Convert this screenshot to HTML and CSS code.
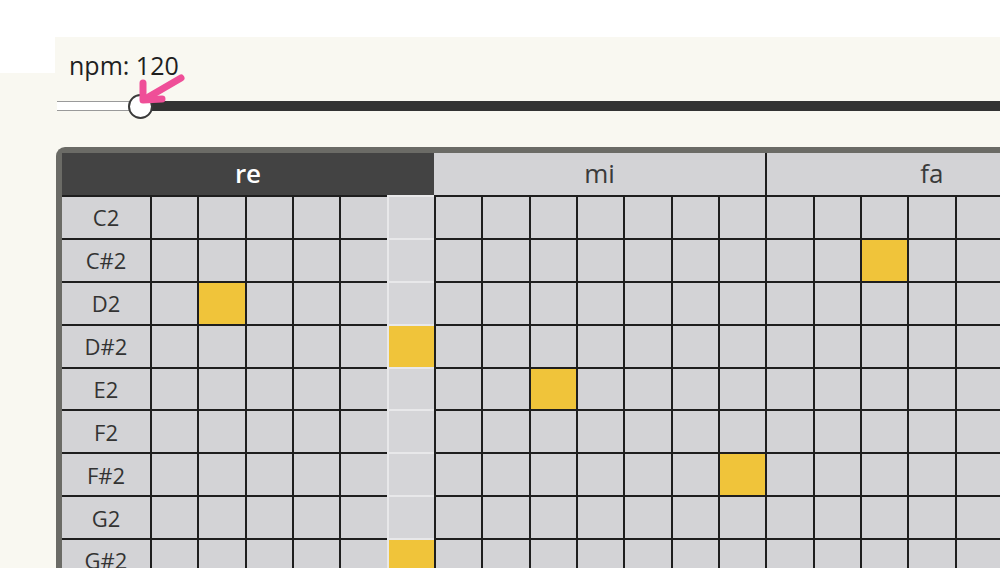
FILE: index.html
```html
<!DOCTYPE html>
<html>
<head>
<meta charset="utf-8">
<link rel="stylesheet" href="styles.css">
</head>
<body>
<div class="topbar"></div>
<div class="head">
  <div class="corner"></div>
  <div class="bpm"><span class="bpm-label">npm: 120</span></div>
</div>
<main class="main">
  <div class="slider">
    <div class="track-left"></div>
    <div class="track-right"></div>
    <div class="thumb"></div>
    <svg class="arrow" width="50" height="40" viewBox="0 0 50 40">
      <path d="M44 7 L8 28" stroke="#ef4f98" stroke-width="7" stroke-linecap="round" fill="none"/>
      <path d="M6 12 L6 29 L25 28" stroke="#ef4f98" stroke-width="7" stroke-linecap="round" stroke-linejoin="round" fill="none"/>
    </svg>
  </div>
  <div class="frame">
    <div class="grid" id="grid">
      <div class="hdr hdr-active" style="grid-column: span 7">re</div>
      <div class="hdr" style="grid-column: span 7">mi</div>
      <div class="hdr hdr-sep" style="grid-column: span 7">fa</div>
    </div>
  </div>
</main>
<script src="app.js"></script>
</body>
</html>
```
FILE: styles.css
```css
html, body {
  margin: 0;
  padding: 0;
}
body {
  background: #f9f8f1;
  overflow: hidden;
  height: 568px;
  font-family: "Open Sans", "DejaVu Sans", sans-serif;
}
.topbar {
  height: 37px;
  background: #ffffff;
}
.head {
  display: flex;
  height: 36px;
}
.corner {
  width: 55px;
  background: #ffffff;
}
.bpm {
  flex: 1;
  padding: 13px 0 0 14px;
  box-sizing: border-box;
  line-height: 30px;
  font-size: 25px;
  color: #1f1f1f;
  white-space: nowrap;
}
.main {
  padding-top: 28px;
}
.slider {
  position: relative;
  display: flex;
  margin-left: 57px;
  height: 10px;
}
.track-left {
  width: 84px;
  background: #ffffff;
  border-top: 1px solid #9a9a9a;
  border-bottom: 1px solid #9a9a9a;
  box-sizing: border-box;
}
.track-right {
  flex: 1;
  background: #333333;
}
.thumb {
  position: absolute;
  left: 71px;
  top: -7px;
  width: 21px;
  height: 21px;
  border-radius: 50%;
  background: #ffffff;
  border: 2px solid #3a3a3a;
}
.arrow {
  position: absolute;
  left: 80px;
  top: -30px;
}
.frame {
  margin: 36px 0 0 56px;
  width: 1100px;
  border: 6px solid #6b6b66;
  border-right: none;
  border-radius: 9px 0 0 0;
  background: #d3d3d6;
}
.grid {
  display: grid;
  grid-template-columns: 88px repeat(20, 47.333px);
  grid-template-rows: 42px repeat(9, 42.88px);
}
.hdr {
  display: flex;
  align-items: center;
  justify-content: center;
  padding-bottom: 3px;
  font-size: 26px;
  color: #3a3a3a;
  background: #d3d3d6;
  box-sizing: border-box;
}
.hdr-active {
  background: #434343;
  color: #ffffff;
  font-weight: 600;
}
.hdr-sep {
  border-left: 2px solid #1e1e1e;
}
.label {
  display: flex;
  align-items: center;
  justify-content: center;
  font-size: 22px;
  color: #333333;
  border-top: 2px solid #1e1e1e;
  box-sizing: border-box;
  background: #d3d3d6;
}
.cell {
  border-top: 2px solid #1e1e1e;
  border-left: 2px solid #1e1e1e;
  box-sizing: border-box;
  background: #d3d3d6;
}
.cell.now {
  border-top-color: #e8e8ea;
  border-left-color: #e8e8ea;
  background: #d5d5d8;
}
.cell.on {
  background: #f0c43a;
}
```
FILE: app.js
```js
const notes = ["C2","C#2","D2","D#2","E2","F2","F#2","G2","G#2"];
const on = {"C#2":[15],"D2":[1],"D#2":[5],"E2":[8],"F#2":[12],"G#2":[5]};
const grid = document.getElementById("grid");
for (const n of notes) {
  const l = document.createElement("div");
  l.className = "label";
  l.textContent = n;
  grid.appendChild(l);
  for (let c = 0; c < 20; c++) {
    const d = document.createElement("div");
    d.className = "cell" + (c === 5 ? " now" : "") + ((on[n] || []).includes(c) ? " on" : "");
    grid.appendChild(d);
  }
}
```
